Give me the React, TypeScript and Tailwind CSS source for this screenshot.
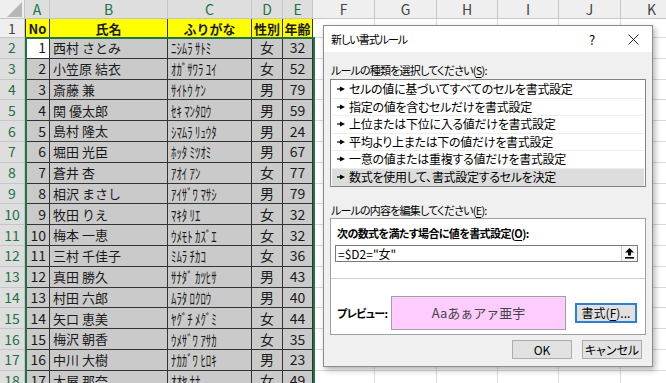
import React from 'react'

type Person = [number, string, string, string, number]

const PEOPLE: Person[] = [
  [1, '西村 さとみ', 'ﾆｼﾑﾗ ｻﾄﾐ', '女', 32],
  [2, '小笠原 結衣', 'ｵｶﾞｻﾜﾗ ﾕｲ', '女', 52],
  [3, '斎藤 兼', 'ｻｲﾄｳ ｹﾝ', '男', 79],
  [4, '関 優太郎', 'ｾｷ ﾏﾝﾀﾛｳ', '男', 59],
  [5, '島村 隆太', 'ｼﾏﾑﾗ ﾘｭｳﾀ', '男', 24],
  [6, '堀田 光臣', 'ﾎｯﾀ ﾐﾂｵﾐ', '男', 67],
  [7, '蒼井 杏', 'ｱｵｲ ｱﾝ', '女', 77],
  [8, '相沢 まさし', 'ｱｲｻﾞﾜ ﾏｻｼ', '男', 79],
  [9, '牧田 りえ', 'ﾏｷﾀ ﾘｴ', '女', 32],
  [10, '梅本 一恵', 'ｳﾒﾓﾄ ｶｽﾞｴ', '女', 32],
  [11, '三村 千佳子', 'ﾐﾑﾗ ﾁｶｺ', '女', 36],
  [12, '真田 勝久', 'ｻﾅﾀﾞ ｶﾂﾋｻ', '男', 43],
  [13, '村田 六郎', 'ﾑﾗﾀ ﾛｸﾛｳ', '男', 40],
  [14, '矢口 恵美', 'ﾔｸﾞﾁ ﾒｸﾞﾐ', '女', 44],
  [15, '梅沢 朝香', 'ｳﾒｻﾞﾜ ｱｻｶ', '女', 35],
  [16, '中川 大樹', 'ﾅｶｶﾞﾜ ﾋﾛｷ', '男', 23],
  [17, '大屋 那奈', 'ｵｵﾔ ﾅﾅ', '女', 49],
]

const COLS = [
  { key: 'A', w: 'w-[25px]', sel: true },
  { key: 'B', w: 'w-[118px]', sel: true },
  { key: 'C', w: 'w-[84px]', sel: true },
  { key: 'D', w: 'w-[31px]', sel: true },
  { key: 'E', w: 'w-[30px]', sel: true },
  { key: 'F', w: 'w-[62px]', sel: false },
  { key: 'G', w: 'w-[62px]', sel: false },
  { key: 'H', w: 'w-[61px]', sel: false },
  { key: 'I', w: 'w-[61px]', sel: false },
  { key: 'J', w: 'w-[62px]', sel: false },
  { key: 'K', w: 'w-[62px]', sel: false },
]

const EMPTY_COLS = COLS.slice(5)

const HEADINGS = ['No', '氏名', 'ふりがな', '性別', '年齢']

const RULE_TYPES = [
  'セルの値に基づいてすべてのセルを書式設定',
  '指定の値を含むセルだけを書式設定',
  '上位または下位に入る値だけを書式設定',
  '平均より上または下の値だけを書式設定',
  '一意の値または重複する値だけを書式設定',
  '数式を使用して、書式設定するセルを決定',
]

function EmptyCells() {
  return (
    <>
      {EMPTY_COLS.map(c => (
        <div key={c.key} className={`${c.w} shrink-0 bg-white border-r border-b border-[#dadada]`} />
      ))}
    </>
  )
}

function Sheet() {
  return (
    <div className="flex flex-col text-[#1a1a1a]">
      {/* column headers */}
      <div className="flex h-[19px]">
        <div className="w-[25px] shrink-0 bg-[#efefef] border-r border-b border-[#c6c6c6] flex items-end justify-end pr-[2px] pb-[1px]">
          <svg width="15" height="15" viewBox="0 0 15 15">
            <polygon points="15,0 15,15 0,15" fill="#b7b7b7" />
          </svg>
        </div>
        {COLS.map(c => (
          <div
            key={c.key}
            className={`${c.w} shrink-0 flex items-center justify-center border-r border-b border-[#c6c6c6] text-[14px] leading-none ${
              c.sel ? 'bg-[#dedede] text-[#217346]' : 'bg-[#efefef] text-[#444]'
            }`}
          >
            {c.key}
          </div>
        ))}
      </div>

      {/* row 1: headings */}
      <div className="flex h-[19px]">
        <div className="w-[25px] shrink-0 bg-[#efefef] border-r border-b border-[#c6c6c6] flex items-center justify-center text-[14px] text-[#444]">
          1
        </div>
        {HEADINGS.map((h, i) => (
          <div
            key={h}
            className={`${COLS[i].w} shrink-0 bg-[#ffff00] border-r border-b border-[#333] flex items-center justify-center text-[13px] font-bold leading-none ${
              i === 0 ? 'border-l' : ''
            }`}
          >
            {h}
          </div>
        ))}
        <EmptyCells />
      </div>

      {/* data rows */}
      {PEOPLE.map((p, idx) => (
        <div key={p[0]} className="flex h-[20.8px] shrink-0">
          <div className="w-[25px] shrink-0 bg-[#dedede] border-r border-b border-[#c6c6c6] flex items-center justify-center text-[14px] text-[#217346]">
            {idx + 2}
          </div>
          <div
            className={`w-[25px] shrink-0 border-l border-r border-b border-[#333] flex items-center justify-end pr-[3px] text-[14px] ${
              idx === 0 ? 'bg-white' : 'bg-[#cacaca]'
            }`}
          >
            {p[0]}
          </div>
          <div className="w-[118px] shrink-0 bg-[#cacaca] border-r border-b border-[#333] flex items-center pl-[3px] text-[13px] whitespace-nowrap">
            {p[1]}
          </div>
          <div className="w-[84px] shrink-0 bg-[#cacaca] border-r border-b border-[#333] flex items-center pl-[3px] overflow-hidden">
            <span className="text-[15px] leading-none whitespace-nowrap origin-left scale-x-[0.72]">{p[2]}</span>
          </div>
          <div className="w-[31px] shrink-0 bg-[#cacaca] border-r border-b border-[#333] flex items-center justify-center text-[14px]">
            {p[3]}
          </div>
          <div className="w-[30px] shrink-0 bg-[#cacaca] border-r border-b border-[#333] flex items-center justify-center text-[14px]">
            {p[4]}
          </div>
          <EmptyCells />
        </div>
      ))}
    </div>
  )
}

function Arrow() {
  return (
    <svg width="8" height="6" viewBox="0 0 8 6" className="shrink-0">
      <line x1="0" y1="3" x2="3.5" y2="3" stroke="#000" strokeWidth="1.2" />
      <polygon points="3,0.5 8,3 3,5.5" fill="#000" />
    </svg>
  )
}

function RuleDialog() {
  return (
    <div className="absolute left-[323px] top-[25px] w-[330px] h-[342px] border border-[#8c8c8c] bg-[#f0f0f0] shadow-[2px_3px_6px_rgba(0,0,0,0.3)] flex flex-col text-[12px] text-black [font-feature-settings:'palt']">
      {/* title bar */}
      <div className="h-[26px] shrink-0 bg-white flex items-center pl-[7px]">
        <span className="leading-none text-[11px] tracking-[-1px]">新しい書式ルール</span>
        <span className="ml-auto w-[44px] text-center text-[13px] leading-none">?</span>
        <span className="w-[38px] flex justify-center">
          <svg width="11" height="11" viewBox="0 0 11 11">
            <path d="M0.5 0.5 L10.5 10.5 M10.5 0.5 L0.5 10.5" stroke="#222" strokeWidth="1" />
          </svg>
        </span>
      </div>

      <div className="flex-1 flex flex-col px-[6px]">
        <div className="mt-[11px] h-[14px] leading-[14px] pl-[1px] text-[11px] tracking-[-0.8px] whitespace-nowrap">
          ルールの種類を選択してください(<span className="underline underline-offset-2">S</span>):
        </div>

        {/* rule type list */}
        <div className="mt-[2px] h-[108px] border border-[#828282] bg-white pt-[1px] flex flex-col">
          {RULE_TYPES.map((r, i) => (
            <div
              key={r}
              className={`h-[17.5px] shrink-0 flex items-center gap-[4px] pl-[5px] mx-[1px] border-b ${
                i === RULE_TYPES.length - 1 ? 'bg-[#dcdcdc] border-transparent' : 'border-[#ededed]'
              }`}
            >
              <Arrow />
              <span className="leading-none whitespace-nowrap tracking-[-0.3px]">{r}</span>
            </div>
          ))}
        </div>

        <div className="mt-[16px] h-[14px] leading-[14px] pl-[1px] text-[11px] tracking-[-0.8px] whitespace-nowrap">
          ルールの内容を編集してください(<span className="underline underline-offset-2">E</span>):
        </div>

        {/* rule description */}
        <div className="mt-[1px] h-[117px] border border-[#a0a0a0] bg-white flex flex-col">
          <div className="mt-[7px] h-[14px] leading-[14px] pl-[6px] font-bold text-[11px] tracking-[-0.6px] whitespace-nowrap">
            次の数式を満たす場合に値を書式設定(<span className="underline underline-offset-2">O</span>):
          </div>
          <div className="mt-[5px] ml-[4px] w-[303px] h-[17px] border border-[#7a7a7a] flex">
            <div className="flex-1 flex items-center pl-[2px] leading-none">=$D2="女"</div>
            <div className="w-[16px] border-l border-[#c8c8c8] bg-[#f7f7f7] flex items-center justify-center">
              <svg width="9" height="11" viewBox="0 0 9 11">
                <polygon points="4.5,0 9,4.5 6,4.5 6,7.5 3,7.5 3,4.5 0,4.5" fill="#000" />
                <rect x="0" y="9" width="9" height="1.6" fill="#000" />
              </svg>
            </div>
          </div>
          <div className="mt-[16px] h-px bg-[#d0d0d0]" />
          <div className="mt-[17px] flex items-center">
            <span className="pl-[6px] w-[60px] shrink-0 font-bold text-[11px] tracking-[-0.6px] leading-none whitespace-nowrap">
              プレビュー:
            </span>
            <div className="w-[175px] h-[34px] border border-[#a0a0a0] bg-[#ffccff] flex items-center justify-center text-[13px] text-[#444] [font-feature-settings:normal]">
              Aaあぁアァ亜宇
            </div>
            <div className="ml-[9px] w-[62px] h-[20px] border-2 border-[#2b7fd6] bg-[#e1e1e1] flex items-center justify-center leading-none">
              書式(<span className="underline underline-offset-2">F</span>)...
            </div>
          </div>
        </div>

        <div className="mt-[5px] flex justify-end gap-[10px] pr-[4px]">
          <div className="w-[60px] h-[19px] border border-[#adadad] bg-[#e1e1e1] flex items-center justify-center leading-none">
            OK
          </div>
          <div className="w-[60px] h-[19px] border border-[#adadad] bg-[#e1e1e1] flex items-center justify-center leading-none">
            キャンセル
          </div>
        </div>
      </div>
    </div>
  )
}

export default function App() {
  return (
    <div className="relative w-[666px] h-[383px] overflow-hidden bg-white font-['Noto_Sans_CJK_JP',sans-serif]">
      <Sheet />
      {/* selection outline A2:E18 */}
      <div className="absolute left-[25px] top-[37px] w-[290px] h-[360px] border-2 border-[#217346]" />
      <RuleDialog />
    </div>
  )
}
